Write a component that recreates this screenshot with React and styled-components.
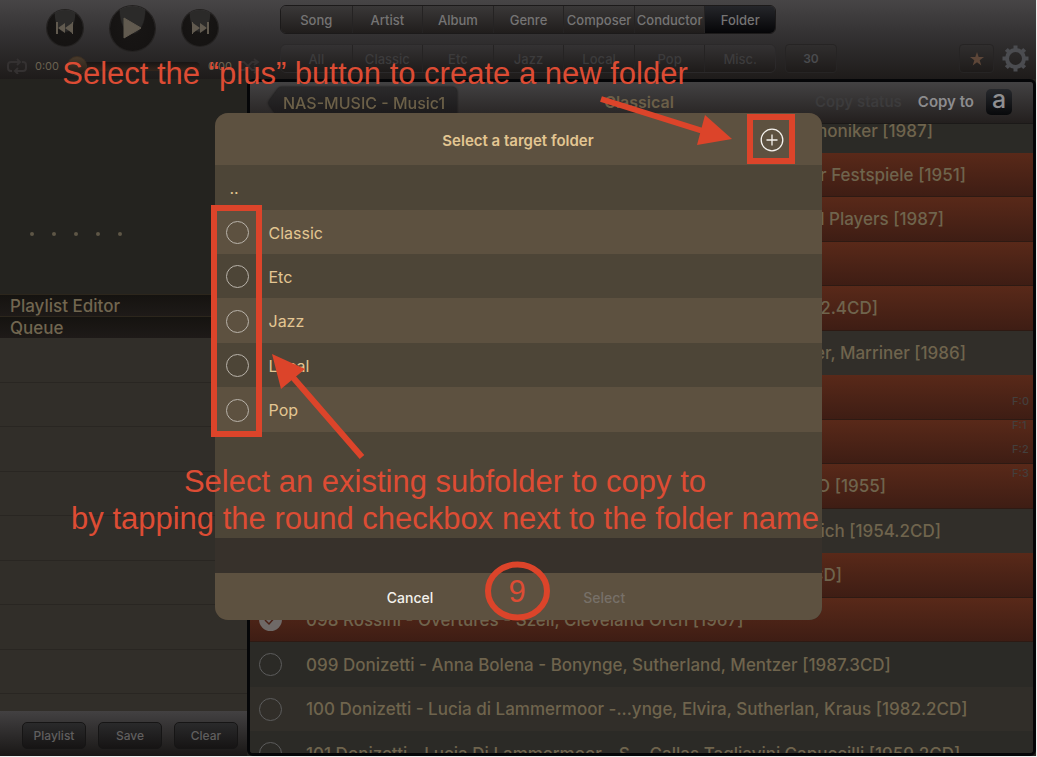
import React from "react";
import styled, { createGlobalStyle, css } from "styled-components";

const Global = createGlobalStyle`
  *, *::before, *::after { box-sizing: border-box; }
  body { margin: 0; background: #24231f; font-family: Inter, Roboto, sans-serif; }
  button { font: inherit; border: 0; padding: 0; background: none; color: inherit; cursor: pointer; }
  ul, h1, h2, p { margin: 0; padding: 0; list-style: none; font-weight: inherit; font-size: inherit; }
`;

const Page = styled.div`
  position: relative;
  display: flex;
  flex-direction: column;
  height: 100vh;
  overflow: hidden;
  background: #24231f;
  border-right: 1px solid #eeeeee;
  border-bottom: 1px solid #eeeeee;
`;

const TopBar = styled.header`
  display: flex;
  flex: none;
  height: 79px;
  background: linear-gradient(#474546, #333132 45%, #1e1b1a);
`;

const Player = styled.section`
  width: 280px;
  flex: none;
  display: flex;
  flex-direction: column;
`;

const Transport = styled.div`
  display: flex;
  align-items: center;
  justify-content: center;
  gap: 27px;
  height: 56px;
  padding-right: 16px;
`;

const RoundButton = styled.button`
  display: grid;
  place-items: center;
  width: ${(p) => p.$size}px;
  height: ${(p) => p.$size}px;
  border-radius: 50%;
  background: radial-gradient(ellipse at 50% 10%, #2b2a29 0 38%, #171514 42%, #141211);
  box-shadow: 0 0 0 1px #242221;
`;

const Progress = styled.div`
  display: flex;
  align-items: center;
  gap: 8px;
  height: 20px;
  padding: 0 20px 0 7px;
  font-size: 11px;
  color: #6b6251;
`;

const Track = styled.input`
  appearance: none;
  flex: 1;
  min-width: 0;
  height: 9px;
  margin: 0;
  border-radius: 5px;
  background: linear-gradient(#181514, #33261d);
  &::-webkit-slider-thumb {
    appearance: none;
    width: 20px;
    height: 20px;
    border-radius: 50%;
    background: linear-gradient(#4a3b2b, #241b16);
    border: 1px solid #3c2f22;
  }
`;

const Filters = styled.section`
  flex: 1;
  display: flex;
  flex-direction: column;
  gap: 10px;
  padding-top: 5px;
`;

const FilterRow = styled.div`
  display: flex;
  align-items: center;
  height: 29px;
`;

const Segments = styled.div`
  display: grid;
  grid-template-columns: repeat(7, minmax(0, 1fr));
  width: 496px;
  height: 29px;
  border-radius: 6px;
  overflow: hidden;
  border: 1px solid ${(p) => (p.$faint ? "#2b292a" : "#1c1a1a")};
`;

const Segment = styled.button`
  display: flex;
  align-items: center;
  justify-content: center;
  font-size: 13px;
  font-weight: 500;
  white-space: nowrap;
  color: #757474;
  background: linear-gradient(#3a3838, #201d1c);
  & + & { border-left: 1px solid #191717; }
  ${(p) => p.$active && css`background: linear-gradient(#25262a, #050507);`}
  ${(p) => p.$faint && css`
    color: #3c3b3c;
    background: linear-gradient(#343233, #1e1b1a);
    & + & { border-left-color: #252323; }
  `}
`;

const SmallBox = styled.button`
  width: ${(p) => p.$width}px;
  height: 29px;
  margin-left: ${(p) => p.$gap}px;
  display: grid;
  place-items: center;
  border-radius: 4px;
  border: 1px solid #262424;
  background: linear-gradient(#302e2e, #1e1b1a);
  color: #4a4b4e;
  font-size: 12px;
  font-weight: 600;
`;

const RightTools = styled.div`
  margin-left: auto;
  display: flex;
  align-items: center;
  gap: 8px;
  padding-right: 7px;
`;

const Body = styled.div`
  flex: 1;
  display: flex;
  min-height: 0;
`;

const Side = styled.aside`
  width: 247px;
  flex: none;
  display: flex;
  flex-direction: column;
  background: #24231f;
`;

const Rating = styled.div`
  display: flex;
  gap: 18px;
  height: 215px;
  flex: none;
  padding: 153px 0 0 30px;
`;

const Dot = styled.span`
  width: 4px;
  height: 4px;
  border-radius: 50%;
  background: #5e5646;
`;

const SideTitle = styled.h2`
  height: 22px;
  flex: none;
  padding-left: 10px;
  border-top: 1px solid #2c261c;
  background: linear-gradient(#151310, #1e1a18);
  font-size: 17px;
  line-height: 22px;
  font-weight: 500;
  color: #716650;
`;

const SideRows = styled.ul`
  flex: 1;
  min-height: 0;
  overflow: hidden;
  background: #312e29;
`;

const SideRow = styled.li`
  height: 45px;
  border-bottom: 1px solid #292622;
  &:nth-child(even) { height: 44px; }
`;

const SideFooter = styled.div`
  height: 45px;
  flex: none;
  display: flex;
  gap: 12px;
  padding: 11px 9px 7px 22px;
  background: linear-gradient(#434142, #191716);
`;

const SideButton = styled.button`
  flex: 1;
  border-radius: 5px;
  border: 1px solid #161515;
  background: linear-gradient(#2a2a2b, #161414);
  color: #605f5f;
  font-size: 12px;
  font-weight: 500;
`;

const Library = styled.main`
  flex: 1;
  min-width: 0;
  display: flex;
  flex-direction: column;
  border: 3px solid #050608;
  border-radius: 6px;
  overflow: hidden;
  background: #2b2a26;
  position: relative;
`;

const LibraryBar = styled.div`
  position: relative;
  z-index: 1;
  display: flex;
  align-items: center;
  justify-content: space-between;
  flex: none;
  height: 42px;
  padding: 0 21px 2px 18px;
  background: linear-gradient(#434243, #231f1e);
  border-bottom: 1px solid #1b1918;
`;

const BackButton = styled.button`
  display: flex;
  height: 32px;
  margin-top: 2px;
  filter: drop-shadow(0 0 1px #111);
  span {
    padding-right: 12px;
    border-radius: 0 5px 5px 0;
    background: linear-gradient(#2b2a2b, #191718);
    color: #6c6048;
    font-size: 16px;
    line-height: 32px;
    font-weight: 500;
  }
`;

const LibraryTitle = styled.h1`
  flex: 1;
  padding-left: 147px;
  font-size: 16px;
  font-weight: 600;
  color: #6b5f48;
`;

const BarActions = styled.div`
  display: flex;
  align-items: center;
  gap: 16px;
  font-size: 15px;
  font-weight: 600;
`;

const TextButton = styled.button`
  font-weight: 600;
  color: ${(p) => (p.$dim ? "#3c3b3c" : "#8d8c8e")};
`;

const LetterButton = styled.button`
  display: flex;
  justify-content: center;
  width: 26px;
  height: 26px;
  margin-left: -4px;
  border-radius: 5px;
  background: linear-gradient(#26282c, #08090b);
  color: #8f8f91;
  font-size: 25px;
  line-height: 21px;
  font-weight: 500;
`;

const Albums = styled.ul`
  flex: 1;
  min-height: 0;
  margin-top: -16px;
  overflow: hidden;
`;

const AlbumRow = styled.li`
  display: flex;
  align-items: center;
  height: 45px;
  padding-left: 9px;
  background: #2b2a26;
  &:nth-child(even) { height: 44px; background: #312e29; }
  && { ${(p) => p.$on && css`
    background: linear-gradient(#592919, #3e1d14);
    border-bottom: 1px solid #2e1a13;
  `} }
  label {
    display: flex;
    justify-content: flex-end;
    margin-left: 24px;
    min-width: ${(p) => p.$end || 0}px;
    white-space: nowrap;
    font-size: 17px;
    font-weight: 500;
    color: #6f644d;
  }
`;

const Round = styled.input`
  appearance: none;
  flex: none;
  width: 23px;
  height: 23px;
  margin: 0;
  border-radius: 50%;
  border: 1px solid ${(p) => (p.$bright ? "#b9b3aa" : "#5c5c5c")};
  ${(p) => !p.$bright && css`
    &:checked {
      border: 0;
      background: #6f6967 url("data:image/svg+xml,%3Csvg xmlns='http://www.w3.org/2000/svg' viewBox='0 0 23 23'%3E%3Cpath d='M6 12l4 4 8-9' fill='none' stroke='%234a2015' stroke-width='1.5'/%3E%3C/svg%3E");
    }
  `}
`;

const IndexList = styled.ul`
  position: absolute;
  right: 4px;
  top: 307px;
  font-size: 11px;
  line-height: 24px;
  font-weight: 500;
  color: #443f3d;
`;

const Overlay = styled.div`
  position: absolute;
  inset: 0;
  z-index: 2;
  display: flex;
  justify-content: center;
  align-items: flex-start;
  padding-top: 113px;
`;

const Dialog = styled.section`
  width: 607px;
  height: 507px;
  display: flex;
  flex-direction: column;
  border-radius: 13px;
  overflow: hidden;
  background: #37312b;
  color: #e3c692;
`;

const DialogHeader = styled.header`
  display: grid;
  grid-template-columns: 1fr auto 1fr;
  align-items: center;
  height: 52px;
  flex: none;
  padding: 2px 38px 0;
  background: #5d5140;
  h2 { font-size: 15px; font-weight: 600; }
`;

const AddButton = styled.button`
  justify-self: end;
  width: 24px;
  height: 24px;
`;

const FolderList = styled.ul`
  height: 373px;
  flex: none;
  background: #4d4537;
`;

const Folder = styled.li`
  display: flex;
  align-items: center;
  height: 45px;
  padding: 1px 0 0 11px;
  font-size: 16px;
  &:nth-child(even) { height: 44px; background: #5d5140; }
  &:nth-child(4), &:nth-child(6) { height: 45px; }
  &:nth-child(3), &:nth-child(5) { height: 44px; }
  label, button { padding-left: ${(p) => (p.$up ? 4 : 20)}px; }
`;

const DialogFooter = styled.footer`
  display: flex;
  justify-content: center;
  gap: 150px;
  height: 47px;
  margin-top: auto;
  flex: none;
  padding: 1px 24px 0 0;
  background: #5d5140;
  font-size: 14px;
`;

const FooterButton = styled.button`
  font-weight: 500;
  color: ${(p) => (p.disabled ? "#777068" : "#f4f1ec")};
`;

const Notes = styled.div`
  position: absolute;
  inset: 0;
  z-index: 3;
  pointer-events: none;
  color: #dd4c34;
  font-family: "Liberation Sans", Arial, sans-serif;
  font-size: 31px;
  line-height: 37px;
  svg { position: absolute; left: 0; top: 0; }
`;

const Note = styled.p`
  position: absolute;
  left: ${(p) => p.$x}px;
  top: ${(p) => p.$y}px;
  transform: translateX(-50%);
  text-align: center;
  white-space: nowrap;
`;

const genres = ["All", "Classic", "Etc", "Jazz", "Local", "Pop", "Misc."];
const views = ["Song", "Artist", "Album", "Genre", "Composer", "Conductor", "Folder"];
const folders = ["Classic", "Etc", "Jazz", "Local", "Pop"];
const albums = [
  { text: "moniker [1987]", end: 627 },
  { text: "r Festspiele [1951]", end: 660, on: true },
  { text: "l Players [1987]", end: 638, on: true },
  { text: "", on: true },
  { text: "2.4CD]", end: 572, on: true },
  { text: "er, Marriner [1986]", end: 660 },
  { text: "", on: true },
  { text: "", on: true },
  { text: "O [1955]", end: 580, on: true },
  { text: "ich [1954.2CD]", end: 635 },
  { text: "CD]", end: 536, on: true },
  { text: "098 Rossini - Overtures - Szell, Cleveland Orch [1967]", on: true },
  { text: "099 Donizetti - Anna Bolena - Bonynge, Sutherland, Mentzer [1987.3CD]" },
  { text: "100 Donizetti - Lucia di Lammermoor -...ynge, Elvira, Sutherlan, Kraus [1982.2CD]" },
  { text: "101 Donizetti - Lucia Di Lammermoor - S... Callas,Tagliavini,Capuccilli [1959.2CD]" },
];

function Skip({ flip }) {
  return (
    <svg width="18" height="12" viewBox="0 0 18 12" fill="#615a4f">
      <g transform={flip ? "translate(18 0) scale(-1 1)" : undefined}>
        <path d="M0 0h2v12H0zM2 6l7-5v10zM9 6l7-5v10zM16 0h1v12h-1z" />
      </g>
    </svg>
  );
}

function Gear() {
  return (
    <svg width="27" height="27" viewBox="0 0 27 27" fill="none" stroke="#4b4c50">
      <circle cx="13.500" cy="13.500" r="8.500" strokeWidth="4" />
      {[0, 45, 90, 135, 180, 225, 270, 315].map((a) => (
        <path key={a} d="M13.500 4V0.500" strokeWidth="4" transform={`rotate(${a} 13.500 13.500)`} />
      ))}
    </svg>
  );
}

function Loop() {
  return (
    <svg width="20" height="16" viewBox="0 0 20 16" fill="none" stroke="#343131" strokeWidth="2">
      <path d="M5 13H4a3 3 0 0 1-3-3V7a3 3 0 0 1 3-3h9M10 1l3 3-3 3M15 4h1a3 3 0 0 1 3 3v3a3 3 0 0 1-3 3H8M11 10l-3 3 3 3" />
    </svg>
  );
}

function Shuffle() {
  return (
    <svg width="20" height="16" viewBox="0 0 20 16" fill="none" stroke="#343131" strokeWidth="2">
      <path d="M1 4h3l8 8h5M1 12h3l8-8h5M14 1l4 3-4 3M14 9l4 3-4 3" />
    </svg>
  );
}

export default function App() {
  return (
    <Page>
      <Global />
      <TopBar>
        <Player>
          <Transport>
            <RoundButton $size={36} aria-label="Previous"><Skip /></RoundButton>
            <RoundButton $size={45} aria-label="Play">
              <svg width="20" height="22" viewBox="0 0 20 22"><path d="M2 1L19 11L2 21z" fill="#615a4f" stroke="#615a4f" strokeLinejoin="round" /></svg>
            </RoundButton>
            <RoundButton $size={36} aria-label="Next"><Skip flip /></RoundButton>
          </Transport>
          <Progress>
            <Loop />
            <span>0:00</span>
            <Track type="range" defaultValue="0" aria-label="Position" />
            <span>0:00</span>
            <Shuffle />
          </Progress>
        </Player>
        <Filters>
          <FilterRow>
            <Segments>
              {views.map((v) => <Segment key={v} $active={v === "Folder"}>{v}</Segment>)}
            </Segments>
          </FilterRow>
          <FilterRow>
            <Segments $faint>
              {genres.map((g) => <Segment key={g} $faint>{g}</Segment>)}
            </Segments>
            <SmallBox $width={52} $gap={9}>30</SmallBox>
            <RightTools>
              <SmallBox $width={35} $gap={0} aria-label="Favorites">
                <svg width="14" height="14" viewBox="0 0 14 14"><path fill="#5d4638" d="M7 0l1.700 5h5.300l-4.300 3.200 1.600 5.300L7 10.300 2.700 13.500l1.600-5.300L0 5h5.300z" /></svg>
              </SmallBox>
              <Gear />
            </RightTools>
          </FilterRow>
        </Filters>
      </TopBar>
      <Body>
        <Side>
          <Rating>{[1, 2, 3, 4, 5].map((n) => <Dot key={n} />)}</Rating>
          <SideTitle>Playlist Editor</SideTitle>
          <SideTitle>Queue</SideTitle>
          <SideRows>{Array.from({ length: 9 }, (_, i) => <SideRow key={i} />)}</SideRows>
          <SideFooter>
            <SideButton>Playlist</SideButton>
            <SideButton>Save</SideButton>
            <SideButton>Clear</SideButton>
          </SideFooter>
        </Side>
        <Library>
          <LibraryBar>
            <BackButton>
              <svg width="15" height="32" viewBox="0 0 15 32">
                <defs><linearGradient id="tip" x2="0" y2="1"><stop stopColor="#2b2a2b" /><stop offset="1" stopColor="#191718" /></linearGradient></defs>
                <path d="M15 0H13Q11 0 9 3L1 14Q0 16 1 18L9 29Q11 32 13 32H15z" fill="url(#tip)" />
              </svg>
              <span>NAS-MUSIC - Music1</span>
            </BackButton>
            <LibraryTitle>Classical</LibraryTitle>
            <BarActions>
              <TextButton $dim>Copy status</TextButton>
              <TextButton>Copy to</TextButton>
              <LetterButton>a</LetterButton>
            </BarActions>
          </LibraryBar>
          <Albums>
            {albums.map(({ text, on, end }, i) => (
              <AlbumRow key={i} $on={on} $end={end}>
                <Round type="checkbox" id={`album${i}`} defaultChecked={on} aria-label={text || "Album"} />
                {text && <label htmlFor={`album${i}`}>{text}</label>}
              </AlbumRow>
            ))}
          </Albums>
          <IndexList>
            {["F:0", "F:1", "F:2", "F:3"].map((t) => <li key={t}>{t}</li>)}
          </IndexList>
        </Library>
      </Body>
      <Overlay>
        <Dialog role="dialog" aria-labelledby="target">
          <DialogHeader>
            <span />
            <h2 id="target">Select a target folder</h2>
            <AddButton aria-label="New folder">
              <svg width="24" height="24" viewBox="0 0 24 24" fill="none" stroke="#f4f1ec" strokeWidth="1.300">
                <circle cx="12" cy="12" r="10.800" /><path d="M12 6.500v11M6.500 12h11" />
              </svg>
            </AddButton>
          </DialogHeader>
          <FolderList>
            <Folder $up><button>..</button></Folder>
            {folders.map((f) => (
              <Folder key={f}>
                <Round $bright type="checkbox" id={`folder${f}`} />
                <label htmlFor={`folder${f}`}>{f}</label>
              </Folder>
            ))}
          </FolderList>
          <DialogFooter>
            <FooterButton>Cancel</FooterButton>
            <FooterButton disabled>Select</FooterButton>
          </DialogFooter>
        </Dialog>
      </Overlay>
      <Notes>
        <svg width="1036" height="756" viewBox="0 0 1036 756" fill="none" stroke="#dc442a">
          <rect x="750" y="117" width="42" height="44" strokeWidth="6" />
          <rect x="214" y="208" width="45" height="226" strokeWidth="6" />
          <ellipse cx="517.500" cy="591" rx="29.500" ry="26.500" strokeWidth="6" />
          <path d="M601 99L706 132M362 457L290 374" strokeWidth="6" />
          <path d="M732 139L705 115L697 145zM272 354L305 369L281 389z" fill="#dc442a" stroke="none" />
        </svg>
        <Note $x={375} $y={55}>Select the “plus” button to create a new folder</Note>
        <Note $x={445} $y={463}>Select an existing subfolder to copy to<br />by tapping the round checkbox next to the folder name</Note>
        <Note $x={517} $y={573}>9</Note>
      </Notes>
    </Page>
  );
}
